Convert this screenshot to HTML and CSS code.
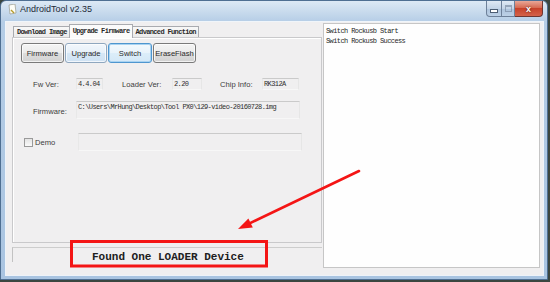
FILE: index.html
```html
<!DOCTYPE html>
<html>
<head>
  <title>AndroidTool v2.35</title>
  <link rel="stylesheet" href="styles.css">
</head>
<body>

  <div class="window">
    <div class="titlebar">
      <svg class="app-icon" width="9" height="11" viewBox="0 0 9 11">
        <path d="M1 1 L7 0 L8 9 L2 10 Z" fill="#fdfdf6" stroke="#8a8a7a" stroke-width="0.6"/>
        <path d="M3 6 L6 9" stroke="#b59b2a" stroke-width="1.4"/>
      </svg>
      <span class="title">AndroidTool v2.35</span>
      <div class="caption-btns">
        <span class="cb cb-min"><i></i></span>
        <span class="cb cb-max"><i></i></span>
        <span class="cb cb-close">x</span>
      </div>
    </div>

    <div class="client">
      <div class="left">
        <div class="tabs">
          <div class="tab">Download Image</div>
          <div class="tab active">Upgrade Firmware</div>
          <div class="tab">Advanced Function</div>
        </div>

        <div class="panel">
          <div class="btn-row">
            <button class="btn w-firmware">Firmware</button>
            <button class="btn btn-hover w-upgrade">Upgrade</button>
            <button class="btn btn-focus w-switch">Switch</button>
            <button class="btn w-erase">EraseFlash</button>
          </div>

          <div class="row row-ver">
            <span class="label l-fw">Fw Ver:</span>
            <span class="field f-fw">4.4.04</span>
            <span class="label l-loader">Loader Ver:</span>
            <span class="field f-loader">2.20</span>
            <span class="label l-chip">Chip Info:</span>
            <span class="field f-chip">RK312A</span>
          </div>

          <div class="row row-firmware">
            <span class="label l-fw">Firmware:</span>
            <span class="field f-path">C:\Users\MrHung\Desktop\Tool PX0\129-video-20160728.img</span>
          </div>

          <div class="row row-demo">
            <span class="checkbox"></span>
            <span class="label l-demo">Demo</span>
            <span class="field f-demo"></span>
          </div>
        </div>

        <div class="status">Found One LOADER Device</div>
      </div>

      <div class="log">
        <div>Switch Rockusb Start</div>
        <div>Switch Rockusb Success</div>
      </div>
    </div>
  </div>

  <!-- red annotation drawn over the screenshot -->
  <svg class="annot" width="550" height="282" viewBox="0 0 550 282">
    <line x1="359" y1="171" x2="250.6" y2="222.9" stroke="#f41515" stroke-width="2.6" stroke-linecap="round"/>
    <polygon points="238,229 252.8,227.4 248.4,218.4" fill="#f41515"/>
    <rect x="71.5" y="241.5" width="195" height="24.5" fill="none" stroke="#f41515" stroke-width="3"/>
  </svg>

</body>
</html>
```

FILE: styles.css
```css
body {
  margin: 0;
  padding: 0;
  width: 550px;
  height: 282px;
  background: #3b4640;
  overflow: hidden;
  position: relative;
}
.window {
  width: 546px;
  height: 278px;
  border: 1px solid #4f6f92;
  border-radius: 6px 6px 0 0;
  background: linear-gradient(180deg, #dde9f5 0, #c6d9ec 12px, #b5cde6 21px, #a9c4e1 100%);
  display: flex;
  flex-direction: column;
}
.titlebar {
  height: 20px;
  display: flex;
  align-items: flex-start;
  padding-left: 7px;
}
.app-icon {
  margin-top: 3px;
}
.title {
  font-family: "Liberation Sans", sans-serif;
  font-size: 9px;
  color: #1e2a38;
  margin-left: 3px;
  margin-top: 3px;
}
.caption-btns {
  margin-left: auto;
  margin-right: 4px;
  display: flex;
}
.cb {
  height: 16px;
  border: 1px solid #6d8099;
  border-top: none;
  box-sizing: border-box;
  display: flex;
  align-items: center;
  justify-content: center;
}
.cb-min {
  width: 16px;
  border-radius: 0 0 0 4px;
  background: linear-gradient(#dfe9f4, #c3d4e7 50%, #adc3dc 51%, #bcd0e6);
}
.cb-min i {
  width: 6px;
  height: 2px;
  margin-top: 4px;
  background: #fff;
  border: 1px solid #4c5d73;
}
.cb-max {
  width: 13px;
  border-left: none;
  background: linear-gradient(#dfe9f4, #c3d4e7 50%, #adc3dc 51%, #bcd0e6);
}
.cb-max i {
  width: 5px;
  height: 4px;
  border: 1px solid #6f8197;
  border-top-width: 2px;
  opacity: 0.6;
}
.cb-close {
  width: 28px;
  border-left: none;
  border-color: #6e3530;
  border-radius: 0 0 4px 0;
  background: linear-gradient(#e9a797, #d66a52 45%, #c7422a 50%, #d4624a);
  color: #fff;
  font-family: "Liberation Sans", sans-serif;
  font-weight: bold;
  font-size: 9px;
  text-shadow: 0 0 2px #3a1410;
}
.client {
  flex: 1;
  margin: 1px 4px 4px 5px;
  background: #f0eff0;
  box-shadow: 0 0 0 1px rgba(255, 255, 255, 0.8);
  display: flex;
}
.left {
  width: 310px;
  margin-left: 6px;
  display: flex;
  flex-direction: column;
}
.tabs {
  display: flex;
  align-items: flex-end;
  height: 14px;
  margin-top: 1px;
  padding-left: 1px;
}
.tab {
  height: 10px;
  border: 1px solid #a9abb0;
  border-bottom: none;
  background: linear-gradient(#f8f8f8, #ebebeb);
  font-family: "Liberation Mono", monospace;
  font-size: 7px;
  font-weight: bold;
  letter-spacing: -0.65px;
  line-height: 10px;
  color: #2a2a2a;
  padding: 0 2px 0 3px;
  margin-right: -1px;
  white-space: nowrap;
}
.tab.active {
  height: 13px;
  line-height: 13px;
  background: #fbfbfb;
  position: relative;
  z-index: 1;
  margin-bottom: -1px;
}
.panel {
  height: 199px;
  border: 1px solid #c9c9cb;
  box-shadow: inset 1px 1px 0 #fff;
  background: #f0eff0;
  padding: 5px 0 0 8px;
}
.btn-row {
  display: flex;
  gap: 1px;
  height: 20px;
}
.btn {
  margin: 0;
  padding: 0;
  height: 20px;
  border: 1px solid #7a7a7a;
  border-radius: 3px;
  background: linear-gradient(#f4f4f4, #ebebeb 50%, #dddddd 51%, #d2d2d2);
  box-shadow: inset 0 0 0 1px rgba(255, 255, 255, 0.7);
  font-family: "Liberation Sans", sans-serif;
  font-size: 7.6px;
  color: #2b2b2b;
}
.btn-hover {
  border-color: #8fa7bf;
  background: linear-gradient(#f2f7fc, #e6f0f9 50%, #d6e7f6 51%, #cfe2f3);
}
.btn-focus {
  border-color: #4e96cf;
  background: linear-gradient(#f4f9fd, #e8f3fb 50%, #dcedf9 51%, #d4e8f7);
  box-shadow: inset 0 0 0 1px #a9d3f1;
}
.w-firmware { width: 43px; }
.w-upgrade { width: 42px; }
.w-switch { width: 44px; }
.w-erase { width: 43px; }
.row {
  display: flex;
  align-items: center;
}
.label {
  font-family: "Liberation Sans", sans-serif;
  font-size: 7.6px;
  color: #3c3c3c;
  white-space: nowrap;
}
.field {
  box-sizing: border-box;
  border-top: 1px solid #cacaca;
  border-left: 1px solid #e8e8e8;
  border-right: 1px solid #e6e6e6;
  border-bottom: 1px solid #f7f7f7;
  font-family: "Liberation Mono", monospace;
  font-size: 7px;
  letter-spacing: -0.6px;
  color: #2e2e2e;
  white-space: nowrap;
  overflow: hidden;
  padding-left: 1px;
}
.row-ver {
  margin-top: 15px;
  height: 12px;
  padding-left: 12px;
}
.l-fw { width: 43px; }
.f-fw { width: 27px; height: 12px; line-height: 11px; }
.l-loader { width: 50px; margin-left: 19px; }
.f-loader { width: 30px; height: 12px; line-height: 11px; }
.l-chip { width: 42px; margin-left: 18px; }
.f-chip { width: 37px; height: 12px; line-height: 11px; }
.row-firmware {
  margin-top: 11px;
  height: 18px;
  padding-left: 12px;
  align-items: flex-start;
}
.row-firmware .label {
  margin-top: 6px;
}
.f-path {
  width: 224px;
  height: 18px;
  line-height: 10px;
}
.row-demo {
  margin-top: 14px;
  height: 18px;
  padding-left: 3px;
}
.checkbox {
  width: 7px;
  height: 7px;
  border: 1px solid #9a9a9a;
  background: linear-gradient(#e4e4e4, #fafafa);
  margin-right: 2px;
}
.l-demo { width: 43px; }
.f-demo {
  width: 224px;
  height: 18px;
}
.status {
  margin-top: 4px;
  height: 14px;
  border-top: 1px solid #cdcdcd;
  border-left: 1px solid #c2c2c2;
  font-family: "Liberation Mono", monospace;
  font-weight: bold;
  font-size: 11px;
  line-height: 18px;
  color: #202020;
  padding-left: 79px;
  white-space: nowrap;
}
.log {
  width: 213px;
  height: 241px;
  margin: 1px 0 0 1px;
  border: 1px solid #c6c6c6;
  background: #fefefe;
  padding: 2px 0 0 2px;
  font-family: "Liberation Mono", monospace;
  font-size: 7px;
  letter-spacing: -0.6px;
  line-height: 10px;
  color: #262626;
}
.annot {
  position: absolute;
  top: 0;
  left: 0;
  pointer-events: none;
}
```
